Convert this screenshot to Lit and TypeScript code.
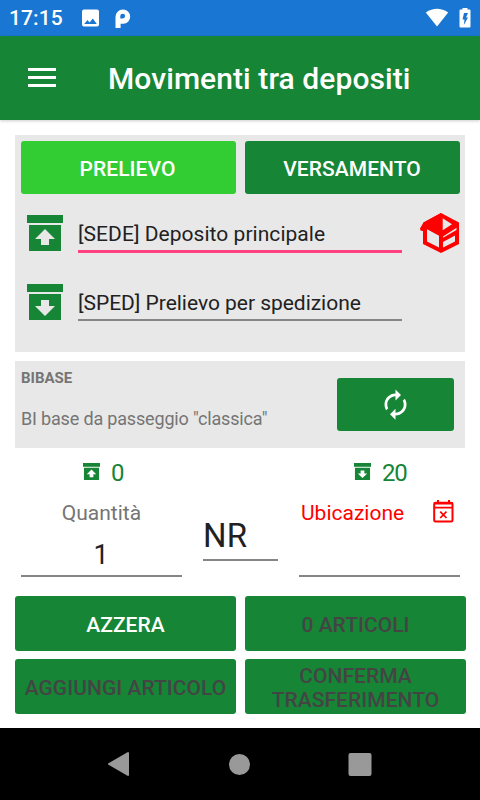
import { LitElement, html, css } from "lit";
import { customElement, property } from "lit/decorators.js";

@customElement("archive-icon")
class ArchiveIcon extends LitElement {
  @property() dir = "up";
  @property({ type: Number }) size = 36;
  static styles = css`
    :host { display: block; flex: none; line-height: 0; }
    svg { display: block; fill: #168536; }
  `;
  render() {
    const arrow = this.dir === "up" ? "M18 14l10 10h-6v6h-8v-6h-6z" : "M14 16h8v6h6l-10 10l-10 -10h6z";
    return html`<svg width=${this.size} height=${this.size} viewBox="0 0 36 36">
      <path d="M0 0h36v8H0z" />
      <path fill-rule="evenodd" d=${"M2 10h32v26H2z" + arrow} />
    </svg>`;
  }
}

@customElement("app-root")
export class AppRoot extends LitElement {
  static styles = css`
    :host {
      display: flex; flex-direction: column; width: 480px; height: 800px;
      background: #fff; color: #212121; font-family: Roboto, sans-serif;
      font-size: 21px; overflow: hidden;
    }
    * { box-sizing: border-box; }
    svg { display: block; flex: none; }
    .status { height: 36px; background: #1976d2; color: #fff; display: flex; align-items: center; padding: 0 9px 0 9px; flex: none; }
    .time { font-weight: 500; width: 72px; line-height: 37px; letter-spacing: .1px; }
    .status .p { margin-left: 15px; }
    .status .wifi { margin-left: auto; }
    .status .bat { margin: 0 0 0 10px; }
    .bar { height: 84px; background: #168536; color: #fff; display: flex; align-items: flex-start; padding-left: 28px; flex: none; box-shadow: 0 1px 3px rgba(0,0,0,.2); }
    .burger { margin-top: 32px; }
    .title { margin-left: 52px; font-size: 30px; font-weight: 500; line-height: 86px; letter-spacing: .08px; white-space: nowrap; }
    main { flex: 1; padding: 15px 14px 0 15px; }
    .panel { width: 450px; background: #e8e8e8; }
    .depots { height: 217px; padding: 6px 5px 0 6px; }
    .tabs, .actions { display: grid; grid-template-columns: 1fr 1fr; gap: 8px 9px; }
    .btn { background: #168536; color: #fff; border-radius: 3px; font-weight: 500; display: flex; align-items: center; justify-content: center; text-align: center; line-height: 24px; letter-spacing: .04px; }
    .tabs .btn { height: 53px; padding-top: 3px; padding-right: 1px; }
    .tabs .active { background: #32cd32; padding-right: 2px; }
    .depot { display: flex; padding-left: 6px; }
    .first { margin-top: 21px; height: 69px; }
    .field { width: 324px; height: 38px; margin-left: 15px; line-height: 38px; letter-spacing: .04px; border-bottom: 3px solid #ff4081; }
    .plain { border-bottom: 2px solid #868686; height: 37px; letter-spacing: -.03px; }
    .cube { margin: -2px 0 0 18px; }
    .item { margin-top: 9px; height: 87px; display: flex; justify-content: space-between; padding: 0 11px 0 6px; color: #757575; }
    .code { font-size: 15px; font-weight: 700; line-height: 18px; margin-top: 8px; }
    .desc { font-size: 18px; line-height: 24px; margin-top: 20px; letter-spacing: -.17px; }
    .refresh { width: 117px; height: 53px; margin-top: 17px; }
    .counts { display: flex; height: 48px; color: #168536; font-size: 24px; line-height: 51px; padding-left: 68px; }
    .count { display: flex; gap: 11px; width: 271px; flex: none; }
    .count:last-child { width: auto; letter-spacing: -1.2px; }
    .count archive-icon { margin-top: 15px; }
    .entries { display: flex; height: 81px; padding-left: 6px; }
    .qty { width: 161px; height: 81px; border-bottom: 2px solid #868686; text-align: center; }
    .lab { height: 34px; line-height: 34px; color: #757575; }
    .num { font-size: 27px; line-height: 50px; height: 40px; padding-right: 1px; }
    .unit { width: 75px; height: 65px; margin-left: 21px; font-size: 33px; line-height: 80px; letter-spacing: .2px; border-bottom: 2px solid #868686; }
    .loc { width: 161px; height: 81px; margin-left: 21px; border-bottom: 2px solid #868686; padding: 0 6px 0 2px; display: flex; justify-content: space-between; }
    .loc .lab { color: #f00; }
    .cal { margin-top: 4px; }
    .actions { margin-top: 19px; }
    .actions .btn { height: 55px; padding-top: 2px; }
    .off { color: #444; }
    nav { height: 72px; background: #000; flex: none; }
  `;
  render() {
    return html`
      <div class="status">
        <span class="time">17:15</span>
        <svg width="19" height="19" viewBox="0 0 19 19"><path fill="#fff" fill-rule="evenodd" d="M3 .5h13q2 0 2 2v13q0 2-2 2H3q-2 0-2-2v-13q0-2 2-2zM3.200 15h12.600l-4-5.400-3.200 4-2.100-2.700z"/></svg>
        <svg class="p" width="17" height="19" viewBox="0 0 17 19"><path fill="#fff" fill-rule="evenodd" d="M.5 19V8A7.300 7.300 0 0 1 7.900.5A7.200 7.200 0 0 1 15.200 7.700A7.100 7.100 0 0 1 8.300 14.800H5.600V19zM7.700 4.700A2.400 2.400 0 0 0 5.300 7.100V9.500H7.700A2.400 2.400 0 0 0 7.700 4.700z"/></svg>
        <svg class="wifi" width="24" height="20" viewBox="0 0 24 20"><path fill="#fff" d="M12 18.500L.8 4.500Q12-3 23.200 4.500z"/></svg>
        <svg class="bat" width="12" height="20" viewBox="0 0 12 20"><path fill="#fff" fill-rule="evenodd" d="M3.500 0h5v1.500H10.500q1 0 1 1v16q0 1-1 1h-9q-1 0-1-1v-16q0-1 1-1h2zM5 5L3.500 11.500h2L4.800 17L9 9.500H7L9 5z"/></svg>
      </div>
      <div class="bar">
        <svg class="burger" width="28" height="19" viewBox="0 0 28 19"><path fill="#fff" d="M0 0h28v3H0zM0 8h28v3H0zM0 16h28v3H0z"/></svg>
        <span class="title">Movimenti tra depositi</span>
      </div>
      <main>
        <section class="panel depots">
          <div class="tabs"><div class="btn active">PRELIEVO</div><div class="btn">VERSAMENTO</div></div>
          <div class="depot first">
            <archive-icon dir="up"></archive-icon>
            <div class="field">[SEDE] Deposito principale</div>
            <svg class="cube" width="40" height="40" viewBox="0 0 40 40">
              <path fill="#f00" fill-rule="evenodd" d="M21 0L39 9.500V31L21 40L3 31V18L.5 17.500L0 15.500L3.500 9.500zM7 16V28.500L19 34.500V22.500L17 21.500zM22.700 5.300V17.300L32 11.300zM23 23.500V24.800L36.500 17V14.700zM23 29V34.500L35 28.500V22.500z"/>
              <path fill="#f00" d="M3.500 9.500L21 0V19L19 22.500L7 16L2 18z"/>
            </svg>
          </div>
          <div class="depot">
            <archive-icon dir="down"></archive-icon>
            <div class="field plain">[SPED] Prelievo per spedizione</div>
          </div>
        </section>
        <section class="panel item">
          <div><div class="code">BIBASE</div><div class="desc">BI base da passeggio "classica"</div></div>
          <div class="btn refresh">
            <svg width="33" height="33" viewBox="0 0 24 24"><path fill="#fff" d="M12 6v3l4-4-4-4v3c-4.420 0-8 3.580-8 8 0 1.570.46 3.030 1.240 4.260L6.700 14.800c-.45-.83-.7-1.790-.7-2.800 0-3.310 2.690-6 6-6zm6.760 1.740L17.300 9.200c.44.840.7 1.790.7 2.800 0 3.310-2.690 6-6 6v-3l-4 4 4 4v-3c4.420 0 8-3.580 8-8 0-1.570-.46-3.030-1.240-4.260z"/></svg>
          </div>
        </section>
        <div class="counts">
          <div class="count"><archive-icon dir="up" size="17"></archive-icon><span>0</span></div>
          <div class="count"><archive-icon dir="down" size="17"></archive-icon><span>20</span></div>
        </div>
        <div class="entries">
          <div class="qty"><div class="lab">Quantità</div><div class="num">1</div></div>
          <div class="unit">NR</div>
          <div class="loc">
            <span class="lab">Ubicazione</span>
            <svg class="cal" width="21" height="23" viewBox="0 0 21 23" fill="none" stroke="#f00" stroke-width="2"><path d="M5 0v4M16 0v4"/><path d="M7.200 11.700l6.300 6.300M13.500 11.700l-6.300 6.300" stroke-width="1.700"/><path d="M1 3.500h19M1 7.700h19" stroke-width="1.800"/><rect x="1.200" y="2.800" width="18.300" height="18.700" rx="1.200"/></svg>
          </div>
        </div>
        <div class="actions">
          <div class="btn">AZZERA</div><div class="btn off">0 ARTICOLI</div>
          <div class="btn off">AGGIUNGI ARTICOLO</div><div class="btn off">CONFERMA<br>TRASFERIMENTO</div>
        </div>
      </main>
      <nav>
        <svg width="480" height="72" viewBox="0 0 480 72" fill="#999" stroke="#999" stroke-width="2" stroke-linejoin="round"><path d="M109 36L128 25V47z"/><circle cx="239.500" cy="36.500" r="9.500"/><rect x="349.500" y="26" width="21" height="21" rx="1"/></svg>
      </nav>`;
  }
}
